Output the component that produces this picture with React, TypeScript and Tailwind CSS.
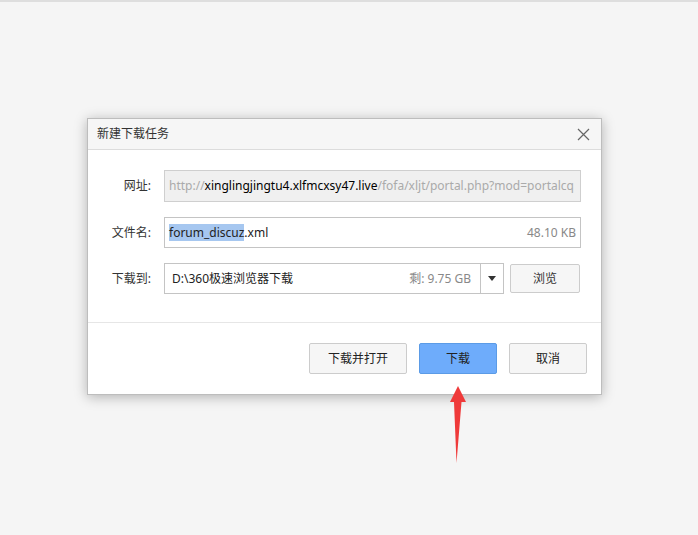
import React from "react";

const font = { fontFamily: '"Noto Sans", "Noto Sans CJK SC", sans-serif' };

export default function App() {
  return (
    <div
      className="relative h-[535px] w-[698px] overflow-hidden bg-[#f5f5f5] border-t-2 border-[#dedede]"
      style={font}
    >
      <div className="pl-[87px] pt-[116px]">
        <div className="w-[515px] border border-[#bdbdbd] bg-white shadow-[0_2px_12px_rgba(0,0,0,0.28)]">
          {/* title bar */}
          <div className="flex h-[31px] items-center justify-between border-b border-[#dcdcdc] bg-[#f6f6f6] pl-[9px] pr-[11px]">
            <span className="text-[12px] text-[#333]">新建下载任务</span>
            <svg width="13" height="13" viewBox="0 0 13 13">
              <path d="M1 1L12 12M12 1L1 12" stroke="#666" strokeWidth="1.2" />
            </svg>
          </div>
          {/* body */}
          <div className="flex flex-col gap-[15px] pt-[20px] pb-[28px] pr-[20px]">
            <div className="flex items-center">
              <div className="w-[64px] pr-[1px] text-right text-[12px] text-[#333]">网址:</div>
              <div className="ml-[12px] flex h-[32px] flex-1 items-center overflow-hidden whitespace-nowrap border border-[#cfcfcf] bg-[#f0f0f0] pl-[4px] text-[12px]">
                <span className="text-[#aaa]">http://</span>
                <span className="text-black">xinglingjingtu4.xlfmcxsy47.live</span>
                <span className="text-[#aaa]">/fofa/xljt/portal.php?mod=portalcq</span>
              </div>
            </div>
            <div className="flex items-center">
              <div className="w-[64px] pr-[1px] text-right text-[12px] text-[#333]">文件名:</div>
              <div className="ml-[12px] flex h-[31px] flex-1 items-center justify-between whitespace-nowrap border border-[#c4c4c4] bg-white pl-[4px] pr-[4px] text-[12px]">
                <span className="text-[#222]">
                  <span className="bg-[#a6c7f0]">forum_discuz</span>.xml
                </span>
                <span className="text-[#888]">48.10 KB</span>
              </div>
            </div>
            <div className="flex items-center">
              <div className="w-[64px] pr-[1px] text-right text-[12px] text-[#333]">下载到:</div>
              <div className="ml-[12px] flex h-[31px] w-[340px] items-stretch border border-[#c4c4c4] bg-white text-[12px]">
                <div className="flex flex-1 items-center justify-between pl-[7px] pr-[9px]">
                  <span className="text-[#222]">D:\360极速浏览器下载</span>
                  <span className="text-[#888]">剩: 9.75 GB</span>
                </div>
                <div className="flex w-[23px] items-center justify-center border-l border-[#c4c4c4]">
                  <svg width="8" height="5" viewBox="0 0 8 5">
                    <path d="M0 0H8L4 5Z" fill="#333" />
                  </svg>
                </div>
              </div>
              <button className="ml-[6px] flex h-[29px] w-[70px] items-center justify-center rounded-[2px] border border-[#cccccc] bg-[#f6f6f6] text-[12px] text-[#333]">
                浏览
              </button>
            </div>
          </div>
          {/* footer */}
          <div className="flex justify-end gap-[12px] border-t border-[#e6e6e6] pt-[20px] pb-[20px] pr-[14px]">
            <button className="flex h-[31px] w-[98px] items-center justify-center rounded-[2px] border border-[#cccccc] bg-[#f6f6f6] text-[12px] text-[#222]">
              下载并打开
            </button>
            <button className="flex h-[31px] w-[78px] items-center justify-center rounded-[2px] border border-[#5b9be6] bg-[#6eacfb] text-[12px] text-[#222]">
              下载
            </button>
            <button className="flex h-[31px] w-[78px] items-center justify-center rounded-[2px] border border-[#cccccc] bg-[#f6f6f6] text-[12px] text-[#222]">
              取消
            </button>
          </div>
        </div>
      </div>
      {/* red arrow annotation */}
      <svg
        className="absolute left-[446px] top-[380px]"
        width="24"
        height="84"
        viewBox="446 380 24 84"
      >
        <path d="M458 384L466 400L461.5 400L456.5 461L454 400L450 400Z" fill="#ef3a3a" />
      </svg>
    </div>
  );
}
